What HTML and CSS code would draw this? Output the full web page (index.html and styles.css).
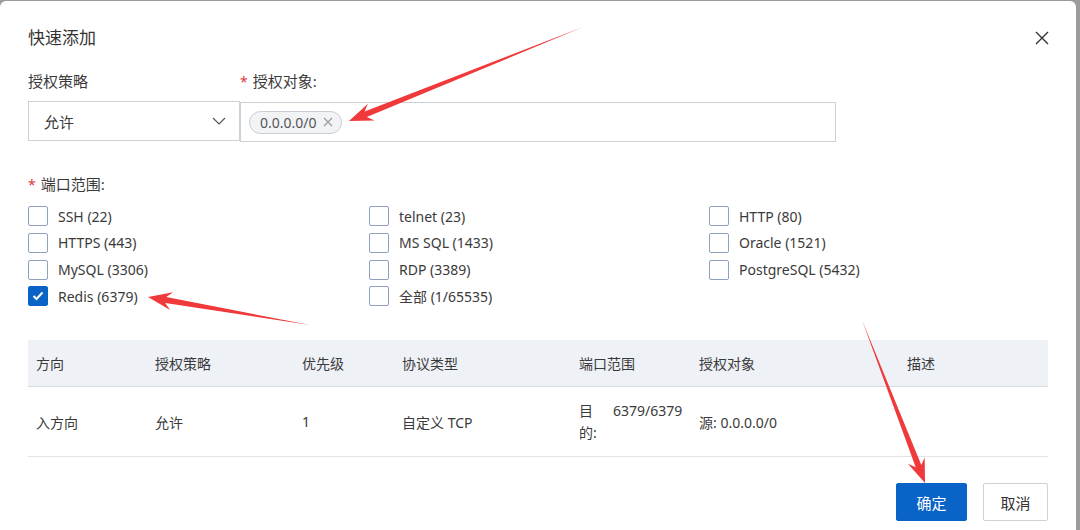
FILE: index.html
```
<!DOCTYPE html>
<html lang="zh-CN">
<head>
<meta charset="utf-8">
<title>快速添加</title>
<link rel="stylesheet" href="styles.css">
</head>
<body>
<div class="modal">
  <div class="modal-header">
    <div class="modal-title">快速添加</div>
    <svg class="close" width="14" height="14" viewBox="0 0 14 14"><path d="M1 1 L13 13 M13 1 L1 13" stroke="#333" stroke-width="1.4" fill="none"/></svg>
  </div>

  <div class="form-row">
    <div class="field field-policy">
      <div class="label">授权策略</div>
      <div class="select">
        <span>允许</span>
        <svg width="14" height="8" viewBox="0 0 14 8"><path d="M1 1 L7 7 L13 1" stroke="#555" stroke-width="1.2" fill="none"/></svg>
      </div>
    </div>
    <div class="field field-target">
      <div class="label"><span class="req">*</span>授权对象:</div>
      <div class="tag-input">
        <span class="tag">0.0.0.0/0<svg width="10" height="10" viewBox="0 0 10 10"><path d="M1 1 L9 9 M9 1 L1 9" stroke="#9a9a9a" stroke-width="1.1" fill="none"/></svg></span>
      </div>
    </div>
  </div>

  <div class="label ports-label"><span class="req">*</span>端口范围:</div>
  <div class="checks">
    <label class="check"><span class="box"></span>SSH (22)</label>
    <label class="check"><span class="box"></span>telnet (23)</label>
    <label class="check"><span class="box"></span>HTTP (80)</label>
    <label class="check"><span class="box"></span>HTTPS (443)</label>
    <label class="check"><span class="box"></span>MS SQL (1433)</label>
    <label class="check"><span class="box"></span>Oracle (1521)</label>
    <label class="check"><span class="box"></span>MySQL (3306)</label>
    <label class="check"><span class="box"></span>RDP (3389)</label>
    <label class="check"><span class="box"></span>PostgreSQL (5432)</label>
    <label class="check"><span class="box checked"><svg width="12" height="10" viewBox="0 0 12 10"><path d="M1.5 5 L4.5 8 L10.5 1.5" stroke="#fff" stroke-width="2" fill="none"/></svg></span>Redis (6379)</label>
    <label class="check"><span class="box"></span>全部 (1/65535)</label>
  </div>

  <table class="rules">
    <colgroup>
      <col class="c1"><col class="c2"><col class="c3"><col class="c4"><col class="c5"><col class="c6"><col class="c7">
    </colgroup>
    <thead>
      <tr><th>方向</th><th>授权策略</th><th>优先级</th><th>协议类型</th><th>端口范围</th><th>授权对象</th><th>描述</th></tr>
    </thead>
    <tbody>
      <tr>
        <td>入方向</td><td>允许</td><td>1</td><td>自定义 TCP</td>
        <td><div class="port"><span class="port-key">目的:</span><span>6379/6379</span></div></td>
        <td>源: 0.0.0.0/0</td><td></td>
      </tr>
    </tbody>
  </table>

  <div class="footer">
    <button class="btn btn-primary">确定</button>
    <button class="btn">取消</button>
  </div>
</div>

<svg class="arrows" width="1080" height="530" viewBox="0 0 1080 530">
  <polygon points="583,27 366.8,117.1 374.7,120.5 349,121 367.9,103.7 364.6,111.5" />
  <polygon points="310,325 165.2,303.1 170.1,310.0 148,297 173.1,292.2 166.2,297.1" />
  <polygon points="862,320 915.7,467.3 907.9,463.8 925,483 924.7,457.4 921.3,465.1" />
</svg>
</body>
</html>
```

FILE: styles.css
```
* { box-sizing: border-box; }

body {
  margin: 0;
  padding-top: 1px;
  background: #9b9b9b;
  font-family: "Noto Sans", "Noto Sans CJK SC", sans-serif;
  color: #3a3a3a;
  overflow: hidden;
}

.modal {
  width: 1076px;
  height: 529px;
  background: #fff;
  border-radius: 6px 6px 0 0;
  padding: 0 28px;
}

.modal-header {
  display: flex;
  justify-content: space-between;
  align-items: center;
  padding-top: 26px;
}

.modal-title {
  font-size: 17px;
  line-height: 22px;
  color: #333;
}

.close { margin-right: -1px; }

.form-row {
  display: flex;
  margin-top: 22px;
}

.field-policy { width: 212px; }
.field-target { width: 596px; }

.label {
  font-size: 15px;
  line-height: 20px;
  color: #3a3a3a;
  margin-bottom: 10px;
}

.req {
  color: #e0393e;
  margin-right: 5px;
  font-size: 14px;
}

.select {
  height: 40px;
  border: 1px solid #ccd0d7;
  display: flex;
  align-items: center;
  justify-content: space-between;
  padding: 0 13px 0 15px;
  font-size: 15px;
}

.tag-input {
  height: 40px;
  border: 1px solid #ccd0d7;
  display: flex;
  align-items: center;
  padding: 0 8px;
}

.tag {
  display: inline-flex;
  align-items: center;
  gap: 6px;
  height: 23px;
  padding: 0 8px 0 10px;
  border: 1px solid #c9cdd4;
  border-radius: 12px;
  background: #f2f3f5;
  font-size: 14px;
  color: #555;
}

.ports-label { margin-top: 32px; margin-bottom: 8px; }

.checks {
  display: grid;
  grid-template-columns: 341px 340px 1fr;
  grid-auto-rows: 26.67px;
}

.check {
  display: flex;
  align-items: center;
  gap: 10px;
  font-size: 14px;
  color: #3a3a3a;
}

.box {
  width: 20px;
  height: 20px;
  border: 1px solid #8ea2bf;
  border-radius: 2px;
  display: flex;
  align-items: center;
  justify-content: center;
  background: #fff;
}

.box.checked {
  background: #0a64c8;
  border-color: #0a64c8;
}

.rules {
  width: 1020px;
  margin-top: 30px;
  border-collapse: collapse;
  table-layout: fixed;
  font-size: 14px;
  color: #3a3a3a;
}

.c1 { width: 119px; }
.c2 { width: 147px; }
.c3 { width: 100px; }
.c4 { width: 177px; }
.c5 { width: 120px; }
.c6 { width: 208px; }
.c7 { width: 149px; }

.rules th {
  height: 47px;
  background: #eef1f6;
  border-bottom: 1px solid #d6dae1;
  text-align: left;
  font-weight: normal;
  padding: 0 8px;
}

.rules td {
  height: 70px;
  border-bottom: 1px solid #e4e4e4;
  padding: 0 8px;
  vertical-align: middle;
}

.port {
  display: flex;
  align-items: flex-start;
  gap: 8px;
  line-height: 22px;
}

.port-key { width: 26px; }

.footer {
  display: flex;
  justify-content: flex-end;
  gap: 16px;
  margin-top: 26px;
}

.btn {
  height: 38px;
  width: 65px;
  border: 1px solid #cfd2d6;
  border-radius: 2px;
  background: #fff;
  font-family: "Noto Sans", "Noto Sans CJK SC", sans-serif;
  font-size: 15px;
  color: #333;
  padding: 0;
}

.btn-primary {
  width: 71px;
  background: #0a64c8;
  border-color: #0a64c8;
  color: #fff;
}

.arrows {
  position: absolute;
  top: 0;
  left: 0;
  pointer-events: none;
}

.arrows polygon { fill: #f0393a; }
```
